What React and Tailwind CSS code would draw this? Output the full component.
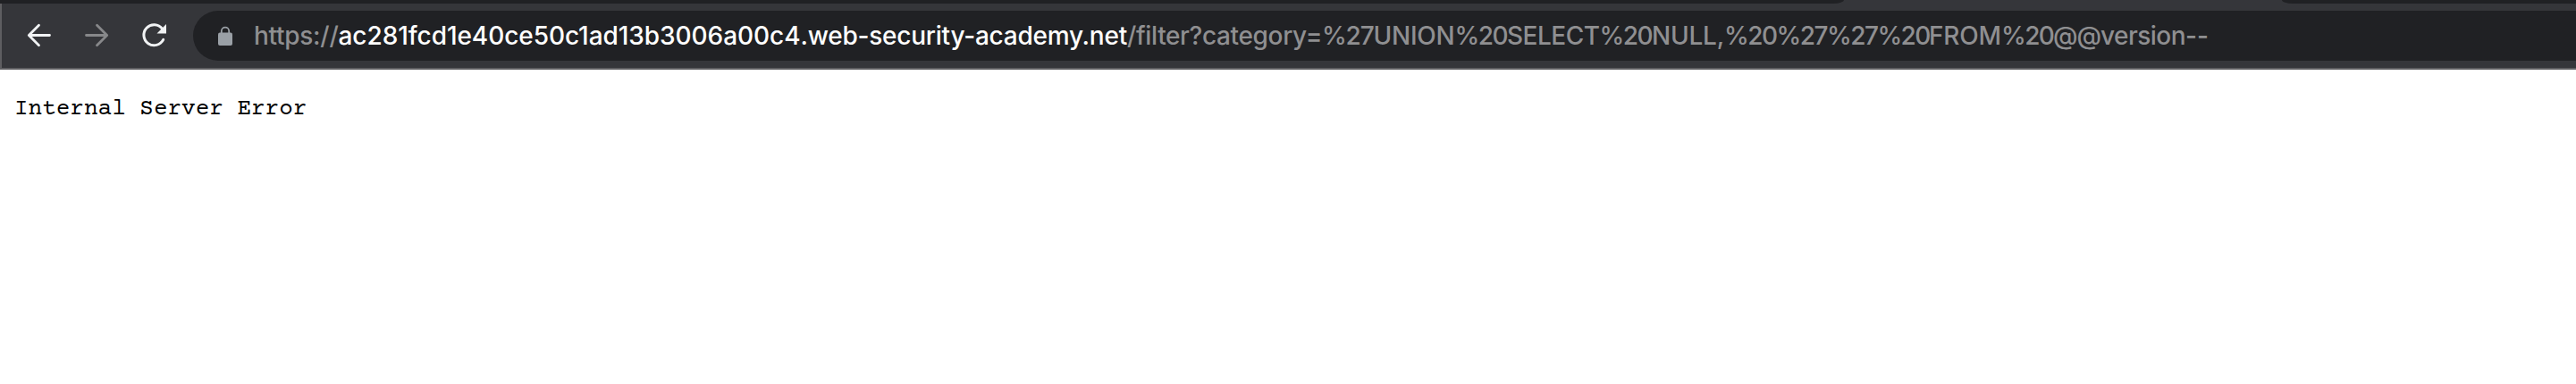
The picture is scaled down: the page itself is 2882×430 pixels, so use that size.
const URL_PARTS = [
  { text: "https://", style: "w-[94.5px] tracking-[-0.28px]" },
  { text: "ac281fcd1e40ce50c1ad13b3006a00c4", style: "w-[517px] tracking-[-0.06px] text-white" },
  { text: ".web-security-academy.net", style: "w-[365.5px] tracking-[-0.24px] text-white" },
  { text: "/filter?category=", style: "w-[218px] tracking-[-0.36px]" },
  { text: "%27", style: "w-[57.5px] tracking-[-1.2px]" },
  { text: "UNION", style: "w-[91px] tracking-[-0.24px]" },
  { text: "%20", style: "w-[58.5px] tracking-[-1.53px]" },
  { text: "SELECT", style: "w-[103.5px] tracking-[-0.5px]" },
  { text: "%20", style: "w-[58.5px] tracking-[-1.53px]" },
  { text: "NULL,", style: "w-[81px] tracking-[-0.22px]" },
  { text: "%20", style: "w-[58.5px] tracking-[-1.53px]" },
  { text: "%27", style: "w-[56.5px] tracking-[-1.53px]" },
  { text: "%27", style: "w-[56.5px] tracking-[-1.53px]" },
  { text: "%20", style: "w-[57.5px] tracking-[-1.7px]" },
  { text: "FROM", style: "w-[81px] tracking-[-0.18px]" },
  { text: "%20", style: "w-[58px] tracking-[-1.65px]" },
  { text: "@@", style: "w-[53px] tracking-[-1px]" },
  { text: "version", style: "w-[95px] tracking-[-0.53px]" },
  { text: "--", style: "w-[26px]" },
];

function TabStrip() {
  return (
    <div className="flex h-1 justify-between bg-[#35363a]">
      <div className="w-[2063px] rounded-br-[12px_4px] bg-[#202124]" />
      <div className="w-[329px] rounded-bl-[12px_4px] bg-[#202124]" />
    </div>
  );
}

function Toolbar() {
  return (
    <div className="flex h-[74px] items-center border-b-2 border-l-2 border-[#5e5e61] bg-[#35363a]">
      <svg className="ml-[26px] h-8 w-8 shrink-0" viewBox="28 24 32 32" fill="none" stroke="#f1f3f4" strokeWidth="2.8" strokeLinecap="round" strokeLinejoin="round">
        <path d="M55.5 39.5H32.5M43.5 28.2L32.3 39.5L43.5 50.8" />
      </svg>
      <svg className="ml-8 h-8 w-8 shrink-0" viewBox="92 24 32 32" fill="none" stroke="#87888a" strokeWidth="2.8" strokeLinecap="round" strokeLinejoin="round">
        <path d="M96.5 39.5H119.5M108.5 28.2L119.7 39.5L108.5 50.8" />
      </svg>
      <svg className="ml-8 h-8 w-8 shrink-0" viewBox="156 24 32 32" fill="none">
        <path d="M181.5 32.2A11.5 11.5 0 1 0 182.7 44.4" stroke="#f1f3f4" strokeWidth="3" strokeLinecap="round" />
        <path d="M186 27V37.5H175.5Z" fill="#f1f3f4" />
      </svg>
      <div className="ml-7 flex h-14 grow items-center rounded-l-full bg-[#202124]">
        <svg className="ml-7 h-6 w-4 shrink-0" viewBox="244 28 16 24" fill="none">
          <rect x="244" y="36.5" width="16" height="14.5" rx="2" fill="#9aa0a6" />
          <path d="M247.8 38V34.8a4.2 4.2 0 0 1 8.4 0V38" stroke="#9aa0a6" strokeWidth="1.8" />
        </svg>
        <div className="ml-6 flex font-['Inter',sans-serif] text-[28px] leading-8 font-medium whitespace-nowrap text-[#8f8f91]">
          {URL_PARTS.map((part, i) => (
            <span key={i} className={part.style}>{part.text}</span>
          ))}
        </div>
      </div>
    </div>
  );
}

export default function App() {
  return (
    <div className="flex h-[430px] w-[2882px] flex-col overflow-hidden bg-white">
      <TabStrip />
      <Toolbar />
      <pre className="mt-[29px] ml-4 font-['Courier_Prime','Liberation_Mono',monospace] text-[26px] leading-8 text-black">Internal Server Error</pre>
    </div>
  );
}
